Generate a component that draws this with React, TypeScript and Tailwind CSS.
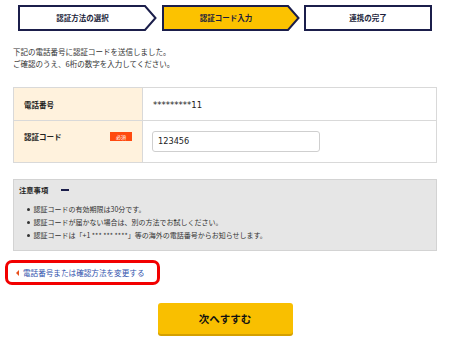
import React from "react";

const JP = "font-['Noto_Sans_CJK_JP','Noto_Sans',sans-serif]";

function Step({
  label,
  width,
  arrow,
  active,
}: {
  label: string;
  width: number;
  arrow: boolean;
  active?: boolean;
}) {
  const w = width;
  const h = 26;
  const body = arrow ? w - 12 : w - 1;
  const d = arrow
    ? `M1,1 H${body} L${w - 1.5},13 L${body},25 H1 Z`
    : `M1,1 H${w - 1} V25 H1 Z`;
  return (
    <div className="relative flex items-center justify-center h-[26px] shrink-0" style={{ width: w }}>
      <svg className="absolute inset-0" width={w} height={h} viewBox={`0 0 ${w} ${h}`}>
        <path d={d} fill={active ? "#fcc200" : "#ffffff"} stroke="#1b1e4b" strokeWidth="2" strokeLinejoin="miter" />
      </svg>
      <span
        className={`relative text-[7.5px] leading-[10px] font-bold text-[#1b1e3b] ${arrow ? "pr-[10px]" : ""}`}
      >
        {label}
      </span>
    </div>
  );
}

export default function App() {
  return (
    <div className={`w-[450px] h-[339px] bg-white overflow-hidden ${JP} text-[#333]`}>
      <div className="px-[13px]">
        {/* Stepper */}
        <div className="flex pt-[5px] pl-[5px] gap-[5px]">
          <Step label="認証方法の選択" width={139} arrow />
          <Step label="認証コード入力" width={138} arrow active />
          <div className="-ml-[1px]">
            <Step label="連携の完了" width={128} arrow={false} />
          </div>
        </div>

        {/* Description */}
        <div className="mt-[15px] text-[7.5px] leading-[12px] text-[#333]">
          <p>下記の電話番号に認証コードを送信しました。</p>
          <p>ご確認のうえ、6桁の数字を入力してください。</p>
        </div>

        {/* Table */}
        <div className="mt-[17px] border border-[#d9d9d9]">
          <div className="flex h-[33px] border-b border-[#d9d9d9]">
            <div className="w-[129px] shrink-0 bg-[#fff2dd] border-r border-[#d9d9d9] pl-[10px] pt-[12px]">
              <span className="text-[7.5px] leading-[10px] font-bold text-[#222] block">電話番号</span>
            </div>
            <div className="flex items-center pl-[10px] pt-[3px]">
              <span className="font-['DejaVu_Sans',sans-serif] text-[8.5px] text-[#222]">*********11</span>
            </div>
          </div>
          <div className="flex h-[41px]">
            <div className="w-[129px] shrink-0 bg-[#fff2dd] border-r border-[#d9d9d9] pl-[10px] pr-[10px] pt-[11px] flex items-start justify-between">
              <span className="text-[7.5px] leading-[10px] font-bold text-[#222]">認証コード</span>
              <span className="w-[22px] h-[9px] bg-[#ff4a10] text-white text-[5px] leading-[9px] text-center">必須</span>
            </div>
            <div className="flex items-start pl-[9px] pt-[10px]">
              <div className="w-[168px] h-[21px] border border-[#cfcfcf] rounded-[3px] flex items-center pl-[5px]">
                <span className="font-['DejaVu_Sans',sans-serif] text-[8.2px] text-[#222]">123456</span>
              </div>
            </div>
          </div>
        </div>

        {/* Notes */}
        <div className="mt-[16px] bg-[#e6e6e6] border border-[#d3d3d3] pt-[5px] pb-[8px] pl-[5px]">
          <div className="flex items-center gap-[13px] h-[10px]">
            <span className="text-[7.3px] leading-[10px] font-bold text-[#222]">注意事項</span>
            <span className="w-[8px] h-[2.5px] bg-[#1b1e4b]" />
          </div>
          <ul className="mt-[8px] pl-[8px] text-[7px] leading-[13px] text-[#333]">
            {[
              "認証コードの有効期限は30分です。",
              "認証コードが届かない場合は、別の方法でお試しください。",
              "認証コードは「+1 *** *** ****」等の海外の電話番号からお知らせします。",
            ].map((t) => (
              <li key={t} className="flex items-center gap-[4px]">
                <span className="w-[2.5px] h-[2.5px] rounded-full bg-[#333] shrink-0" />
                <span className="whitespace-pre">{t}</span>
              </li>
            ))}
          </ul>
        </div>

        {/* Link with red highlight */}
        <div className="mt-[9px] -ml-[8px] w-[155px] h-[25px] border-[3px] border-[#f20000] rounded-[7px] flex items-center pl-[8px] gap-[4px]">
          <span className="w-0 h-0 border-y-[3px] border-y-transparent border-r-[3px] border-r-[#e8501c]" />
          <span className="text-[7.6px] leading-[10px] text-[#2f52ad]">電話番号または確認方法を変更する</span>
        </div>

        {/* Button */}
        <div className="mt-[18px] flex justify-center">
          <button className="w-[135px] h-[31px] bg-[#f9bf00] rounded-[3px] shadow-[0_2px_0_#d4a000] flex items-center justify-center">
            <span className="text-[10.5px] font-bold text-[#111]">次へすすむ</span>
          </button>
        </div>
      </div>
    </div>
  );
}
